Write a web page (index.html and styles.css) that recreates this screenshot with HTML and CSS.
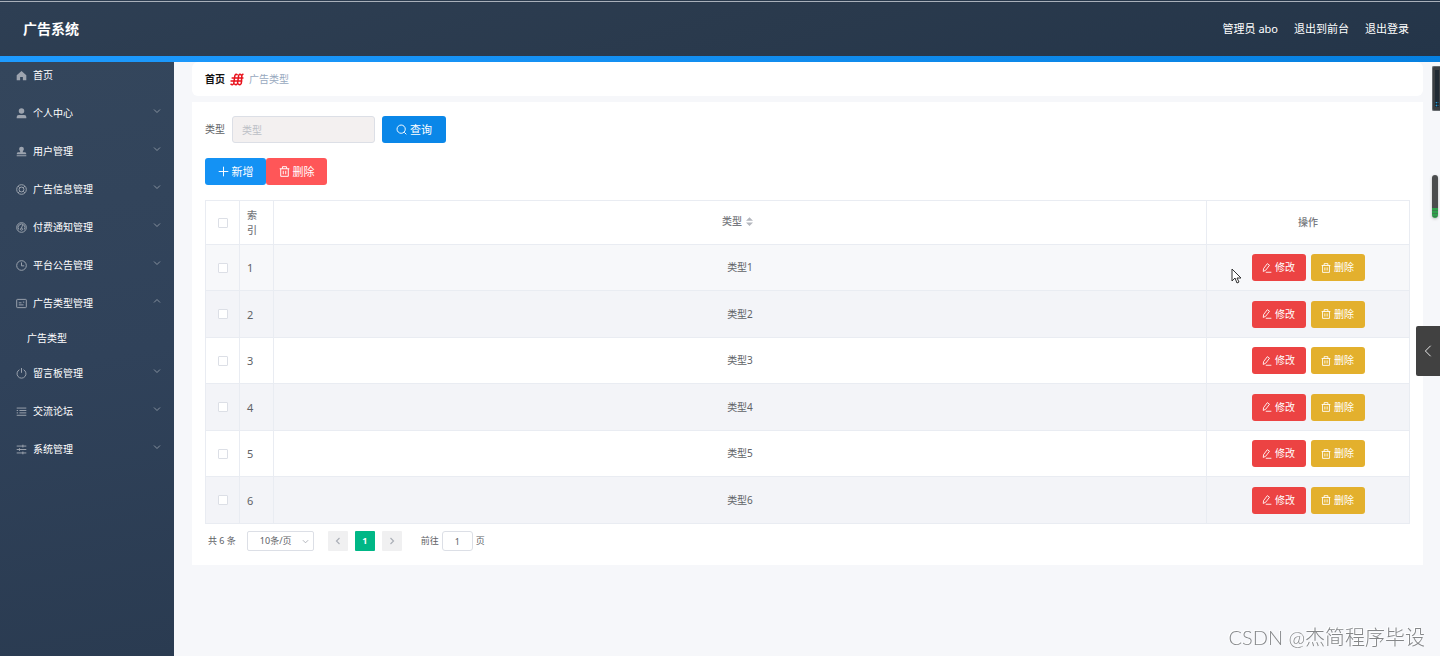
FILE: index.html
```html
<!DOCTYPE html>
<html lang="zh-CN">
<head>
<meta charset="utf-8">
<title>广告系统</title>
<link rel="stylesheet" href="styles.css">
</head>
<body>
<svg class="sprite" aria-hidden="true">
  <symbol id="down" viewBox="0 0 16 16"><path d="M2 5l6 6 6-6"/></symbol>
  <symbol id="up" viewBox="0 0 16 16"><path d="M2 11l6-6 6 6"/></symbol>
  <symbol id="left" viewBox="0 0 16 16"><path d="M11 2L5 8l6 6"/></symbol>
  <symbol id="right" viewBox="0 0 16 16"><path d="M5 2l6 6-6 6"/></symbol>
  <symbol id="home" viewBox="0 0 16 16"><path class="solid" d="M8 1.500L1 7.500V15h5v-5h4v5h5V7.500z"/></symbol>
  <symbol id="user" viewBox="0 0 16 16"><circle class="solid" cx="8" cy="4.500" r="4"/><path class="solid" d="M1 15v-2q0-3 3-3h8q3 0 3 3v2z"/></symbol>
  <symbol id="stamp" viewBox="0 0 16 16"><path class="solid" d="M8 1a3.500 3.500 0 0 1 3.500 3.500C11.500 6.500 9.800 7 9.800 9H13q2 0 2 3H1q0-3 2-3h3.200C6.200 7 4.500 6.500 4.500 4.500A3.500 3.500 0 0 1 8 1zM1 13.500h14V15H1z"/></symbol>
  <symbol id="help" viewBox="0 0 16 16"><circle cx="8" cy="8" r="7"/><circle cx="8" cy="8" r="3.500"/><path d="M3 3l2.500 2.500M13 3l-2.500 2.500M3 13l2.500-2.500M13 13l-2.500-2.500"/></symbol>
  <symbol id="gauge" viewBox="0 0 16 16"><circle cx="8" cy="8" r="7"/><path d="M4 11A5 5 0 1 1 12 11M9.500 4.500L8 9"/><circle cx="8" cy="10.500" r="1.500"/></symbol>
  <symbol id="clock" viewBox="0 0 16 16"><circle cx="8" cy="8" r="7"/><path d="M8 3.500V8.500h4"/></symbol>
  <symbol id="card" viewBox="0 0 16 16"><rect x="1" y="2" width="14" height="12" rx="1"/><path d="M4 7h4M4 10h7M10 6h2"/></symbol>
  <symbol id="power" viewBox="0 0 16 16"><path d="M5 2.500a6.500 6.500 0 1 0 6 0M8 0v7"/></symbol>
  <symbol id="list" viewBox="0 0 16 16"><path d="M1 3h14M1 6.500h2M5 6.500h10M1 10h2M5 10h10M1 13.500h14"/></symbol>
  <symbol id="sliders" viewBox="0 0 16 16"><path d="M1 3h14M1 8h14M1 13h14M10 1v4M5 6v4M10 11v4"/></symbol>
  <symbol id="search" viewBox="0 0 16 16"><circle cx="7.500" cy="7.500" r="6"/><path d="M12 12l3 3"/></symbol>
  <symbol id="plus" viewBox="0 0 16 16"><path d="M8 1v14M1 8h14"/></symbol>
  <symbol id="trash" viewBox="0 0 16 16"><path d="M1 4h14M5 4V1h6v3M2.500 4v11h11V4M6.200 7v5M9.800 7v5"/></symbol>
  <symbol id="edit" viewBox="0 0 16 16"><path d="M2.500 9L8.500 1l3.500 2.500-6 8L2 13.500zM6 14.800h9"/></symbol>
</svg>

<header class="topbar">
  <h1 class="brand">广告系统</h1>
  <nav class="account">
    <span>管理员 abo</span>
    <a href="#front">退出到前台</a>
    <a href="#logout">退出登录</a>
  </nav>
</header>

<div class="layout">
  <nav class="sidebar">
    <a class="item first" href="#home"><svg class="icon"><use href="#home"/></svg><span>首页</span></a>
    <a class="item" href="#me"><svg class="icon"><use href="#user"/></svg><span>个人中心</span><svg class="arrow"><use href="#down"/></svg></a>
    <a class="item" href="#users"><svg class="icon"><use href="#stamp"/></svg><span>用户管理</span><svg class="arrow"><use href="#down"/></svg></a>
    <a class="item" href="#ads"><svg class="icon"><use href="#help"/></svg><span>广告信息管理</span><svg class="arrow"><use href="#down"/></svg></a>
    <a class="item" href="#pay"><svg class="icon"><use href="#gauge"/></svg><span>付费通知管理</span><svg class="arrow"><use href="#down"/></svg></a>
    <a class="item" href="#notice"><svg class="icon"><use href="#clock"/></svg><span>平台公告管理</span><svg class="arrow"><use href="#down"/></svg></a>
    <a class="item" href="#types"><svg class="icon"><use href="#card"/></svg><span>广告类型管理</span><svg class="arrow"><use href="#up"/></svg></a>
    <a class="subitem" href="#type">广告类型</a>
    <a class="item" href="#board"><svg class="icon"><use href="#power"/></svg><span>留言板管理</span><svg class="arrow"><use href="#down"/></svg></a>
    <a class="item" href="#forum"><svg class="icon"><use href="#list"/></svg><span>交流论坛</span><svg class="arrow"><use href="#down"/></svg></a>
    <a class="item" href="#system"><svg class="icon"><use href="#sliders"/></svg><span>系统管理</span><svg class="arrow"><use href="#down"/></svg></a>
  </nav>

  <main class="content">
    <nav class="crumbs">
      <a href="#home">首页</a>
      <svg class="crumb-mark" viewBox="0 0 26 24"><path d="M1 20q4 4 6-1L9 5q2-5 5-1M8 20q4 4 6-1l2-14q2-5 5-1M15 20q4 4 6-1l1-14q1-4 3-2M3 9h22M1 15h22"/></svg>
      <span>广告类型</span>
    </nav>

    <section class="panel">
      <form class="search">
        <label for="kind">类型</label>
        <input id="kind" class="field" type="text" placeholder="类型">
        <button class="btn query" type="button"><svg><use href="#search"/></svg>查询</button>
      </form>
      <div class="tools">
        <button class="btn add" type="button"><svg><use href="#plus"/></svg>新增</button>
        <button class="btn remove" type="button"><svg><use href="#trash"/></svg>删除</button>
      </div>

      <table class="grid">
        <colgroup><col class="c-check"><col class="c-index"><col><col class="c-ops"></colgroup>
        <thead>
          <tr>
            <th><input type="checkbox" aria-label="全选"></th>
            <th class="index">索引</th>
            <th class="sortable">类型<svg class="sort" viewBox="0 0 8 10"><path d="M4 0l4 4H0zM4 10L0 6h8z"/></svg></th>
            <th>操作</th>
          </tr>
        </thead>
        <tbody>
          <tr class="hover"><td><input type="checkbox" aria-label="选择 1"></td><td class="index">1</td><td>类型1</td><td><div class="ops"><button class="btn edit" type="button"><svg><use href="#edit"/></svg>修改</button><button class="btn del" type="button"><svg><use href="#trash"/></svg>删除</button></div></td></tr>
          <tr><td><input type="checkbox" aria-label="选择 2"></td><td class="index">2</td><td>类型2</td><td><div class="ops"><button class="btn edit" type="button"><svg><use href="#edit"/></svg>修改</button><button class="btn del" type="button"><svg><use href="#trash"/></svg>删除</button></div></td></tr>
          <tr><td><input type="checkbox" aria-label="选择 3"></td><td class="index">3</td><td>类型3</td><td><div class="ops"><button class="btn edit" type="button"><svg><use href="#edit"/></svg>修改</button><button class="btn del" type="button"><svg><use href="#trash"/></svg>删除</button></div></td></tr>
          <tr><td><input type="checkbox" aria-label="选择 4"></td><td class="index">4</td><td>类型4</td><td><div class="ops"><button class="btn edit" type="button"><svg><use href="#edit"/></svg>修改</button><button class="btn del" type="button"><svg><use href="#trash"/></svg>删除</button></div></td></tr>
          <tr><td><input type="checkbox" aria-label="选择 5"></td><td class="index">5</td><td>类型5</td><td><div class="ops"><button class="btn edit" type="button"><svg><use href="#edit"/></svg>修改</button><button class="btn del" type="button"><svg><use href="#trash"/></svg>删除</button></div></td></tr>
          <tr><td><input type="checkbox" aria-label="选择 6"></td><td class="index">6</td><td>类型6</td><td><div class="ops"><button class="btn edit" type="button"><svg><use href="#edit"/></svg>修改</button><button class="btn del" type="button"><svg><use href="#trash"/></svg>删除</button></div></td></tr>
        </tbody>
      </table>

      <div class="pager">
        <span class="total">共 6 条</span>
        <span class="size"><select aria-label="每页条数"><option>10条/页</option></select><svg><use href="#down"/></svg></span>
        <div class="pages">
          <button type="button" aria-label="上一页"><svg><use href="#left"/></svg></button>
          <button class="current" type="button">1</button>
          <button type="button" aria-label="下一页"><svg><use href="#right"/></svg></button>
        </div>
        <div class="jump"><label for="page">前往</label><input id="page" type="text" value="1"><span>页</span></div>
      </div>
    </section>
  </main>
</div>

<div class="monitor"><i></i></div>
<div class="meter"></div>
<button class="drawer" type="button" aria-label="展开"><svg><use href="#left"/></svg></button>
<svg class="pointer" viewBox="0 0 10 16"><path d="M1 1v12l3-3 2 5 2-1-2-4h4z"/></svg>
<div class="watermark">CSDN @杰简程序毕设</div>
</body>
</html>
```
FILE: styles.css
```css
* { box-sizing: border-box; }
body {
  margin: 0;
  min-height: 100vh;
  display: flex;
  flex-direction: column;
  background: #f6f7fa;
  color: #606266;
  font: 10px/15px "Noto Sans", "Noto Sans CJK SC", sans-serif;
}
a { color: inherit; text-decoration: none; }
button, input, select { font: inherit; color: inherit; margin: 0; }
svg { fill: none; stroke: currentColor; flex: none; }
.solid { fill: currentColor; stroke: none; }
.sprite { position: absolute; width: 0; height: 0; }

.topbar {
  display: flex;
  align-items: center;
  justify-content: space-between;
  height: 62px;
  padding: 0 31px 0 23px;
  border-top: 1px solid #000;
  border-bottom: 6px solid #0a86e8;
  border-image: linear-gradient(90deg, #1e9bff, #0680e0) 6;
  border-image-width: 0 0 6px;
  background: linear-gradient(165deg, #2e3f54, #2a3a4d 50%, #243549);
  box-shadow: inset 0 1px #a9b0ba;
  color: #fff;
}
.brand { margin: 0; font-size: 14px; line-height: 20px; font-weight: 700; }
.account { display: flex; gap: 16px; font-size: 11px; line-height: 16px; }

.layout { flex: 1; display: flex; }
.sidebar {
  flex: none;
  width: 174px;
  background: linear-gradient(170deg, #34465c, #30425a 50%, #2a3b51);
  color: #fff;
}
.item { display: flex; align-items: center; height: 38px; padding: 0 13px 0 16px; }
.item.first { height: 26px; margin-bottom: 6px; }
.icon { width: 11px; height: 11px; margin-right: 6px; color: #9da4af; stroke-width: 1.4; }
.arrow { width: 8px; height: 8px; margin: 0 0 4px auto; color: #9aa3af; stroke-width: 1.6; }
.subitem { display: flex; align-items: center; height: 32px; padding-left: 27px; }

.content { flex: 1; min-width: 0; padding: 0 17px 0 18px; }
.crumbs {
  display: flex;
  align-items: center;
  gap: 5px;
  height: 34px;
  padding: 0 13px;
  margin-bottom: 6px;
  border-radius: 6px;
  background: #fff;
  color: #97a8be;
}
.crumbs a { color: #111; font-weight: 700; }
.crumb-mark { width: 14px; height: 13px; color: #e8121c; stroke-width: 2.8; }
.panel { padding: 14px 13px 14px; background: #fff; }

.btn {
  display: flex;
  align-items: center;
  justify-content: center;
  gap: 3px;
  height: 27px;
  padding: 0;
  border: 0;
  border-radius: 3px;
  color: #fff;
  font-size: 11px;
  line-height: 16px;
}
.btn svg { width: 11px; height: 11px; stroke-width: 1.4; }
.search { display: flex; align-items: center; margin-bottom: 15px; }
.field {
  width: 143px;
  height: 27px;
  margin: 0 7px;
  padding: 0 9px;
  border: 1px solid #dcdfe6;
  border-radius: 3px;
  background: #f3f0f0;
}
.field::placeholder { color: #bcbfc6; opacity: 1; }
.query { width: 64px; background: #0a87e8; }
.tools { display: flex; margin-bottom: 15px; }
.add { width: 61px; background: #1492f4; }
.remove { width: 61px; background: #ff5658; }

.grid { width: 100%; table-layout: fixed; border-collapse: collapse; }
.c-check, .c-index { width: 34px; }
.c-ops { width: 203px; }
.grid th, .grid td { padding: 0; border: 1px solid #e9ecf2; text-align: center; }
.grid th { height: 44px; color: #77797e; font-weight: 500; }
.grid td { height: 46px; }
.grid tr:nth-child(even) td { height: 47px; background: #f3f4f8; }
.grid tr.hover td { background: #f7f8fa; }
.grid .index { padding: 0 10px 0 7px; text-align: left; }
.grid .sortable { padding: 0 5px 3px 0; }
.grid td.index { font-size: 11px; }
.grid input {
  appearance: none;
  display: block;
  width: 10px;
  height: 10px;
  margin: 0 auto;
  border: 1px solid #dcdfe6;
  border-radius: 1px;
  background: #fff;
}
.sort { width: 7px; height: 9px; margin-left: 4px; vertical-align: -1px; fill: #b4b7be; stroke: none; }
.ops { display: flex; justify-content: center; gap: 5px; }
.ops .btn { width: 54px; font-size: 10px; line-height: 15px; }
.ops .btn svg { width: 10px; height: 10px; }
.edit { background: #ec4343; }
.del { background: #e3b02d; }

.pager { display: flex; align-items: center; height: 20px; margin-top: 7px; padding-left: 3px; font-size: 9px; line-height: 14px; }
.size { position: relative; margin-left: 11px; }
.size select {
  appearance: none;
  display: block;
  width: 67px;
  height: 20px;
  padding: 0 12px;
  border: 1px solid #dcdfe6;
  border-radius: 2px;
  background: #fff;
}
.size svg { position: absolute; right: 5px; top: 7px; width: 7px; height: 7px; color: #a9adb5; stroke-width: 2; }
.pages { display: flex; gap: 7px; margin: 0 19px 0 14px; }
.pages button {
  display: grid;
  place-items: center;
  width: 20px;
  height: 20px;
  padding: 0;
  border: 0;
  border-radius: 1px;
  background: #f0f0f1;
  color: #abafb7;
}
.pages svg { width: 8px; height: 8px; stroke-width: 2.4; }
.pages .current { background: #00b786; color: #fff; font-weight: 700; }
.jump { display: flex; align-items: center; gap: 3px; }
.jump input { width: 31px; height: 20px; padding: 0; border: 1px solid #dcdfe6; border-radius: 3px; background: #fff; text-align: center; }

.monitor { position: fixed; right: 0; top: 66px; width: 8px; height: 45px; padding: 3px 1px 3px 2px; border: solid #666a6e; border-width: 1px 0 1px 1px; border-radius: 2px 0 0 2px; background: #3b3f43; }
.monitor i { display: block; height: 100%; background: radial-gradient(#1e9bdc 40%, transparent 50%) 0 100% / 3px 3px, #202a33; background-size: 3px 3px; box-shadow: inset 0 32px #202a33; }
.meter { position: fixed; right: 2px; top: 175px; width: 6px; height: 43px; border-radius: 3px; background: repeating-linear-gradient(transparent 0 2px, #4b4d4e66 2px 3px), linear-gradient(#4b4d4e 76%, #2f9f4c 76%); box-shadow: 0 1px 3px #bbb; }
.drawer { position: fixed; right: 0; top: 326px; display: grid; place-items: center; width: 24px; height: 50px; padding: 0; border: 0; border-radius: 2px 0 0 2px; background: #414141; color: #fff; }
.drawer svg { width: 14px; height: 14px; }
.pointer { position: fixed; left: 1231px; top: 268px; width: 10px; height: 16px; fill: #fff; stroke: #303030; }
.watermark { position: fixed; right: 15px; bottom: 6px; color: #858789; font: 300 20px/26px Lato, "Noto Sans CJK SC", sans-serif; text-shadow: -1px -1px #fff; }
```
